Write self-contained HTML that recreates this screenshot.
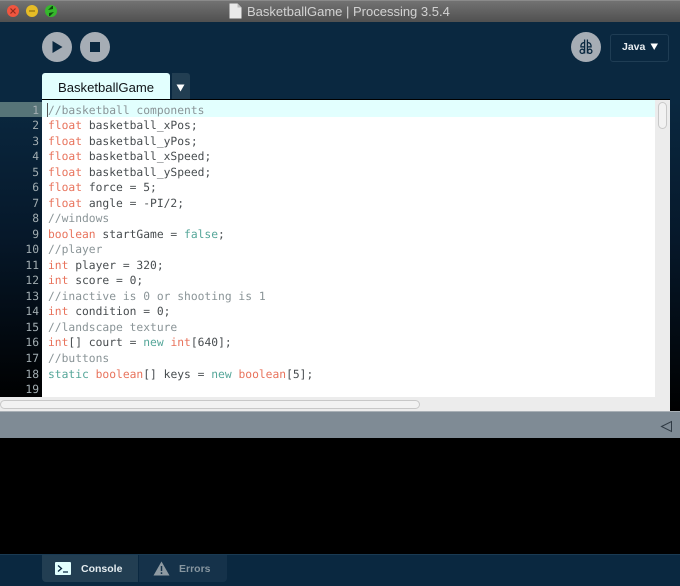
<!DOCTYPE html>
<html>
<head>
<meta charset="utf-8">
<style>
html,body{margin:0;padding:0;background:#000;}
#w{position:relative;width:680px;height:586px;overflow:hidden;font-family:"Liberation Sans",sans-serif;background:#000;}
#w div{position:absolute;}
.dot{width:12px;height:12px;border-radius:50%;top:5px;}
#code,#nums{font-family:"DejaVu Sans Mono","Liberation Mono",monospace;font-size:11.3px;line-height:15.53px;white-space:pre;text-rendering:geometricPrecision;}
.k{color:#e8735c}.c{color:#8a9497}.g{color:#55a699}
#code{left:48px;top:102.5px;color:#474c4f;}
#nums{left:0;width:39px;top:102.5px;text-align:right;color:#a3aeb2;}
</style>
</head>
<body>
<div id="w">
  <div style="left:0;top:0;width:680px;height:22px;background:linear-gradient(#727272,#505050);border-top:1px solid #8a8a8a;box-sizing:border-box;"></div>
  <div class="dot" style="left:7px;background:#f0553f;"></div>
  <div class="dot" style="left:26px;background:#e6bc26;"></div>
  <div class="dot" style="left:45px;background:#35b82c;"></div>
  <svg style="position:absolute;left:0;top:0;" width="70" height="22">
    <path d="M10.5 8.5l5 5M15.5 8.5l-5 5" stroke="#8f2a1c" stroke-width="1.2"/>
    <path d="M29 11h6" stroke="#8f6f10" stroke-width="1.2"/>
    <path d="M48 10l4-4h1v3zM54 12l-4 4h-1v-3z" fill="#0d4a0d"/>
  </svg>
  <svg style="position:absolute;left:229px;top:3px;" width="13" height="16"><path d="M0.5 0.5H8.5L12.5 4.5V15.5H0.5Z" fill="#e9e9e9"/><path d="M8.5 0.5V4.5H12.5" fill="#bbb"/></svg>
  <div style="left:247px;top:4px;font-size:13px;line-height:16px;color:#d2d2d2;white-space:nowrap;">BasketballGame | Processing 3.5.4</div>

  <div style="left:0;top:22px;width:680px;height:78px;background:#0a2840;"></div>
  <div style="left:0;top:100px;width:42px;height:300px;background:linear-gradient(#0a2840 0%,#06182a 45%,#000 100%);"></div>
  <div style="left:670px;top:100px;width:10px;height:312px;background:linear-gradient(#0a2840 0%,#06182a 45%,#000 100%);"></div>
  <div style="left:0;top:400px;width:42px;height:12px;background:#000;"></div>

  <div style="left:42px;top:32px;width:30px;height:30px;border-radius:50%;background:#a6adb5;"></div>
  <svg style="position:absolute;left:42px;top:32px;" width="30" height="30"><path d="M10.5 9L20.5 15L10.5 21Z" fill="#0a2840"/></svg>
  <div style="left:80px;top:32px;width:30px;height:30px;border-radius:50%;background:#a6adb5;"></div>
  <div style="left:90px;top:42px;width:10px;height:10px;background:#0a2840;"></div>

  <div style="left:571px;top:32px;width:30px;height:30px;border-radius:50%;background:#a6adb5;"></div>
  <svg style="position:absolute;left:571px;top:32px;" width="30" height="30" fill="none" stroke="#0a2840" stroke-width="1.3">
    <path d="M13.6 7.5V21.5M16.4 7.5V21.5"/>
    <path d="M13.6 10.5C10.5 10.5 9.5 13 10 15.5"/>
    <path d="M16.4 10.5C19.5 10.5 20.5 13 20 15.5"/>
    <path d="M13.6 15C11.5 14.5 10 15 10 15.5"/>
    <path d="M16.4 15C18.5 14.5 20 15 20 15.5"/>
    <circle cx="11.2" cy="19.3" r="2.1"/><circle cx="18.8" cy="19.3" r="2.1"/>
  </svg>
  <div style="left:610px;top:34px;width:57px;height:26px;border:1px solid #1f3d54;border-radius:3px;"></div>
  <div style="left:622px;top:40px;font-size:10.5px;line-height:14px;font-weight:bold;color:#e8edf0;">Java</div>
  <svg style="position:absolute;left:650px;top:43px;" width="9" height="8"><path d="M0.5 0.5H8L4.2 7Z" fill="#fff"/></svg>

  <div style="left:42px;top:73px;width:128px;height:27px;background:#e2fffe;border-radius:3px 3px 0 0;"></div>
  <div style="left:58px;top:79.5px;font-size:13.1px;line-height:16px;color:#101418;white-space:nowrap;">BasketballGame</div>
  <div style="left:172px;top:73px;width:18px;height:27px;background:#223e52;border-radius:0 3px 0 0;"></div>
  <svg style="position:absolute;left:176px;top:84px;" width="10" height="8"><path d="M0.5 0.5H8.5L4.5 7.5Z" fill="#fff"/></svg>

  <div style="left:42px;top:99px;width:628px;height:1px;background:#000;"></div>
  <div style="left:42px;top:100px;width:628px;height:312px;background:#fff;"></div>
  <div style="left:42px;top:100px;width:613px;height:17px;background:#e2fffe;"></div>
  <div style="left:0;top:102px;width:42px;height:15px;background:#577478;"></div>
  <div style="left:47px;top:103px;width:1px;height:14px;background:#555;"></div>

  <div id="nums">1
2
3
4
5
6
7
8
9
10
11
12
13
14
15
16
17
18
19</div>
  <div id="code"><span class="c">//basketball components</span>
<span class="k">float</span> basketball_xPos;
<span class="k">float</span> basketball_yPos;
<span class="k">float</span> basketball_xSpeed;
<span class="k">float</span> basketball_ySpeed;
<span class="k">float</span> force = 5;
<span class="k">float</span> angle = -PI/2;
<span class="c">//windows</span>
<span class="k">boolean</span> startGame = <span class="g">false</span>;
<span class="c">//player</span>
<span class="k">int</span> player = 320;
<span class="k">int</span> score = 0;
<span class="c">//inactive is 0 or shooting is 1</span>
<span class="k">int</span> condition = 0;
<span class="c">//landscape texture</span>
<span class="k">int</span>[] court = <span class="g">new</span> <span class="k">int</span>[640];
<span class="c">//buttons</span>
<span class="g">static</span> <span class="k">boolean</span>[] keys = <span class="g">new</span> <span class="k">boolean</span>[5];</div>

  <div style="left:655px;top:100px;width:15px;height:312px;background:#ececec;"></div>
  <div style="left:658px;top:102px;width:9px;height:27px;border:1px solid #c8c8c8;border-radius:5px;background:#f2f2f2;box-sizing:border-box;"></div>
  <div style="left:0;top:397px;width:655px;height:15px;background:#ececec;"></div>
  <div style="left:0;top:400px;width:420px;height:9px;border:1px solid #c8c8c8;border-radius:5px;background:#f2f2f2;box-sizing:border-box;"></div>

  <div style="left:0;top:412px;width:680px;height:26px;background:#7f8b95;"></div>
  <div style="left:0;top:411px;width:680px;height:1px;background:#a9b0b6;"></div>
  <svg style="position:absolute;left:660px;top:420px;" width="14" height="13"><path d="M1.5 6.5L11.5 1.5V11.5Z" fill="none" stroke="#2f3a44" stroke-width="1"/></svg>
  <div style="left:0;top:438px;width:680px;height:116px;background:#000;"></div>

  <div style="left:0;top:554px;width:680px;height:32px;background:#0a2840;border-top:1px solid #1a3a52;box-sizing:border-box;"></div>
  <div style="left:42px;top:555px;width:96px;height:27px;background:#223e52;border-radius:0 0 0 4px;"></div>
  <div style="left:139px;top:555px;width:88px;height:27px;background:#15324a;border-radius:0 0 4px 0;"></div>
  <div style="left:55px;top:562px;width:16px;height:13px;background:#e2fffe;border-radius:1px;"></div>
  <svg style="position:absolute;left:55px;top:562px;" width="16" height="13" fill="none" stroke="#0a2840" stroke-width="1.3"><path d="M3 3.5L6.5 6.5L3 9.5M8 10H13"/></svg>
  <div style="left:81px;top:562px;font-size:10.5px;line-height:15px;font-weight:bold;color:#e4ecef;">Console</div>
  <svg style="position:absolute;left:153px;top:561px;" width="17" height="15"><path d="M8.5 0.5L16.5 14.5H0.5Z" fill="#8e9aa2"/><path d="M8.5 5V10M8.5 11.2V13" stroke="#15324a" stroke-width="1.5"/></svg>
  <div style="left:179px;top:562px;font-size:10.5px;line-height:15px;font-weight:bold;color:#8796a0;">Errors</div>
</div>
</body>
</html>
